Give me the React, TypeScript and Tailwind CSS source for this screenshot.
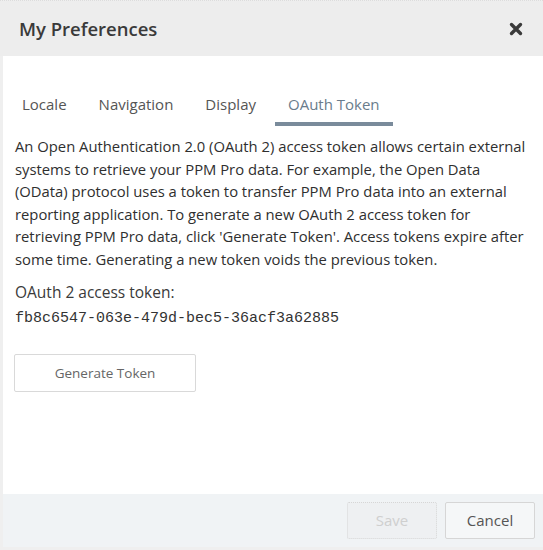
import React from "react";

const tabs = ["Locale", "Navigation", "Display", "OAuth Token"];

const lines = [
  "An Open Authentication 2.0 (OAuth 2) access token allows certain external",
  "systems to retrieve your PPM Pro data. For example, the Open Data",
  "(OData) protocol uses a token to transfer PPM Pro data into an external",
  "reporting application. To generate a new OAuth 2 access token for",
  "retrieving PPM Pro data, click 'Generate Token'. Access tokens expire after",
  "some time. Generating a new token voids the previous token.",
];

const CloseIcon = () => (
  <svg width="14" height="14" viewBox="0 0 14 14" aria-hidden="true">
    <path
      d="M2.5 2.5 L11.5 11.5 M11.5 2.5 L2.5 11.5"
      stroke="#3a3a3a"
      strokeWidth="3.4"
      strokeLinecap="round"
    />
  </svg>
);

export default function App() {
  return (
    <div
      className="w-[543px] h-[550px] flex flex-col bg-[#efefef] text-[#333]"
      style={{ fontFamily: "'Open Sans', 'Liberation Sans', sans-serif" }}
    >
      <div className="h-px border-t border-dotted border-[#dcdcdc]" />
      <header className="h-[55px] flex items-center justify-between pl-[19px] pr-[20px] bg-[#ededed]">
        <h1 className="text-[18.5px] font-semibold text-[#3a3a3a]">My Preferences</h1>
        <button className="flex items-center justify-center">
          <CloseIcon />
        </button>
      </header>

      <div className="flex-1 ml-[3px] bg-white flex flex-col">
        <nav className="flex items-end gap-[6px] pt-[36px] pl-[6px]">
          {tabs.map((t) => {
            const active = t === "OAuth Token";
            return (
              <div
                key={t}
                className={`px-[13px] pb-[6px] border-b-4 ${
                  active ? "border-[#7a8b9b]" : "border-transparent"
                }`}
              >
                <span
                  className={`text-[15px] ${active ? "text-[#6a7c8c]" : "text-[#555]"}`}
                >
                  {t}
                </span>
              </div>
            );
          })}
        </nav>

        <div className="pl-[12px] pr-[12px] pt-[9px]">
          <p className="text-[14.8px] leading-[22.5px] text-[#2f2f2f]">
            {lines.map((l) => (
              <span key={l} className="block whitespace-nowrap">
                {l}
              </span>
            ))}
          </p>

          <div className="mt-[11px] text-[15.5px] leading-[22px] text-[#3a3a3a]">
            OAuth 2 access token:
          </div>
          <div
            className="mt-[5px] text-[15px] leading-[22px] text-[#333]"
            style={{ fontFamily: "'Liberation Mono', monospace" }}
          >
            fb8c6547-063e-479d-bec5-36acf3a62885
          </div>

          <button className="mt-[24px] -ml-[1px] w-[182px] h-[38px] border border-[#d9d9d9] rounded-[2px] text-[13.5px] text-[#666] bg-white">
            Generate Token
          </button>
        </div>
      </div>

      <footer className="h-[53px] ml-[3px] bg-[#f0f3f5] flex items-center justify-end gap-[8px] pr-[8px]">
        <button className="w-[90px] h-[37px] border border-dotted border-[#d6d6d6] rounded-[2px] bg-[#eef0f2] text-[15px] text-[#cfcfcf]">
          Save
        </button>
        <button className="w-[90px] h-[37px] border border-[#d6d6d6] rounded-[2px] bg-[#f5f7f8] text-[15px] text-[#555]">
          Cancel
        </button>
      </footer>
      <div className="h-[3px] bg-[#efefef]" />
    </div>
  );
}
